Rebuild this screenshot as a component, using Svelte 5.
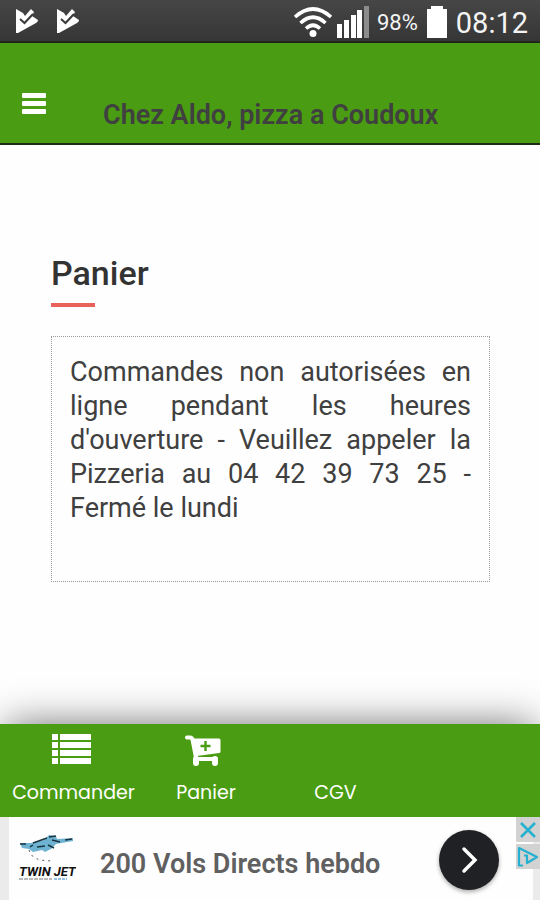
<script>
  const title = 'Chez Aldo, pizza a Coudoux';
  const notice =
    "Commandes non autorisées en ligne pendant les heures d'ouverture - Veuillez appeler la Pizzeria au 04 42 39 73 25 - Fermé le lundi";

  const tabs = [
    { label: 'Commander', icon: 'list' },
    { label: 'Panier', icon: 'cart' },
    { label: 'CGV', icon: null }
  ];

  let adVisible = $state(true);
</script>

<div class="app">
  <div class="status">
    <div class="status-left">
      {#each [0, 1] as i (i)}
        <svg width="24" height="26" viewBox="0 0 24 26">
          <path d="M2 1 L9 5 L11 8 L17 1 L20 4 L18 8 L24 12 Q24 14 22 15 L4 25 L2 25 Z" fill="#fff" />
          <path d="M6 11 L10.500 15 L19 6" fill="none" stroke="#3a3a3a" stroke-width="2" />
        </svg>
      {/each}
    </div>
    <div class="status-right">
      <svg width="40" height="32" viewBox="0 0 40 32">
        <g fill="none" stroke="#fff" stroke-width="3.600">
          <path d="M2 11 Q20 -5 38 11" />
          <path d="M7.500 17 Q20 5.500 32.500 17" />
          <path d="M13 22.500 Q20 16 27 22.500" />
        </g>
        <circle cx="20" cy="27.500" r="3.500" fill="#fff" />
      </svg>
      <svg width="34" height="34" viewBox="0 0 34 34">
        <path d="M1 19h5v14H1zM8 15h5v18H8zM15 10h5v23h-5zM21 5h5v28h-5z" fill="#fff" />
        <path d="M28 1h5v32h-5z" fill="#8c8c8c" />
      </svg>
      <span class="percent">98%</span>
      <svg class="battery" width="20" height="34" viewBox="0 0 20 34">
        <path d="M0 4h4V1h12v3h4v29H0z" fill="#fff" />
      </svg>
      <span class="clock">08:12</span>
    </div>
  </div>

  <header class="header">
    <button class="menu" aria-label="Menu">
      <svg width="24" height="21" viewBox="0 0 24 21">
        <g fill="#fff">
          <rect width="24" height="5" rx="1" />
          <rect y="8" width="24" height="5" rx="1" />
          <rect y="16" width="24" height="5" rx="1" />
        </g>
      </svg>
    </button>
    <h1>{title}</h1>
  </header>

  <main class="content">
    <h2>Panier</h2>
    <div class="notice">
      <p>{notice}</p>
    </div>
  </main>

  <nav class="tabs">
    {#each tabs as tab (tab.label)}
      <a class="tab" href="#{tab.label.toLowerCase()}">
        <span class="tab-icon">
          {#if tab.icon === 'list'}
            <svg width="44" height="32" viewBox="0 0 44 32">
              <path
                d="M0 0h6v6H0zM8 0h31v6H8zM0 8h6v6H0zM8 8h31v6H8zM0 16h6v6H0zM8 16h31v6H8zM0 24h6v6H0zM8 24h31v6H8z"
                fill="#fff"
              />
            </svg>
          {:else if tab.icon === 'cart'}
            <svg width="44" height="34" viewBox="0 0 44 34">
              <path d="M3 3.500h3q2 0 2.500 2L12.500 26" fill="none" stroke="#fff" stroke-width="4" stroke-linecap="round" stroke-linejoin="round" />
              <path d="M8.500 4.500H35q1.500 0 1.500 1.500V17.500q0 1.500-1.500 1.500L13 22z" fill="#fff" />
              <path d="M13 25h19" stroke="#fff" stroke-width="4" stroke-linecap="round" />
              <path d="M12 25v4M31 25v4" stroke="#fff" stroke-width="6" stroke-linecap="round" />
              <path d="M21.500 7v10M16.500 12h10" stroke="#4a9d12" stroke-width="2.400" />
            </svg>
          {/if}
        </span>
        <span>{tab.label}</span>
      </a>
    {/each}
  </nav>

  {#if adVisible}
    <aside class="ad">
      <svg class="ad-logo" width="58" height="50" viewBox="0 0 58 50">
        <path d="M2 9l11 0 13-3 5-5 7 1 1 3 16-1v3l-17 3-5 5-6 3-3-2-9 2-4-3-7-1z" fill="#6fb3d2" />
        <path d="M2 10h6M15 9l14-5M31 3l7-1M30 11l6 3M34 6l8 2M47 6l7-1M19 13l8-1M12 13l3-2" fill="none" stroke="#1b3440" stroke-width="1.500" />
        <path d="M11 16l2 5 8 5 12 1" fill="none" stroke="#555" stroke-dasharray="2 4" />
        <text x="1" y="42">TWIN JET</text>
        <path d="M1 45h33" stroke="#777" stroke-dasharray="4 1" />
        <path d="M36 45h13" stroke="#2c80c4" stroke-dasharray="3 1" />
      </svg>
      <a class="ad-text" href="#annonce">200 Vols Directs hebdo</a>
      <button class="ad-go" aria-label="Ouvrir l'annonce">
        <svg width="18" height="28" viewBox="0 0 18 28">
          <path d="M4 3l11 11L4 25" fill="none" stroke="#fff" stroke-width="3.500" stroke-linecap="round" />
        </svg>
      </button>
      <div class="ad-controls">
        <button aria-label="Fermer l'annonce" onclick={() => (adVisible = false)}>
          <svg width="18" height="18" viewBox="0 0 18 18">
            <path d="M2 2l14 14M16 2L2 16" stroke="#25b0cf" stroke-width="2.500" />
          </svg>
        </button>
        <button aria-label="À propos de cette annonce">
          <svg width="22" height="22" viewBox="0 0 22 22">
            <path d="M6 19.500H2V2L20 11L10 17V9.500H7M9 5v2" fill="none" stroke="#25b0cf" stroke-width="2.200" stroke-linejoin="round" />
          </svg>
        </button>
      </div>
    </aside>
  {/if}
</div>

<style>
  :global(body) {
    margin: 0;
    background: #fefefe;
    font-family: Roboto, 'Liberation Sans', sans-serif;
  }

  .app {
    display: flex;
    flex-direction: column;
    min-height: 100vh;
  }

  svg {
    display: block;
    flex: none;
  }

  h1,
  h2,
  p {
    margin: 0;
  }

  button {
    padding: 0;
    border: 0;
    background: none;
    cursor: pointer;
  }

  .status {
    display: flex;
    justify-content: space-between;
    align-items: center;
    height: 41px;
    padding: 0 12px 0 14px;
    border-bottom: 2px solid #1f241c;
    background: linear-gradient(#464646, #363636);
    color: #f4f4f4;
  }

  .status-left {
    display: flex;
    gap: 17px;
  }

  .status-right {
    display: flex;
    align-items: center;
    gap: 3px;
    padding-top: 2px;
  }

  .percent {
    padding: 2px 6px 0 4px;
    font-size: 22px;
  }

  .clock {
    padding: 2px 0 0 6px;
    font-size: 29px;
  }

  .header {
    display: flex;
    align-items: center;
    height: 80px;
    padding: 20px 22px 0;
    border-bottom: 2px solid #1d2b14;
    background: #4a9d12;
  }

  .menu {
    width: 24px;
  }

  h1 {
    padding: 24px 0 0 57px;
    color: #404040;
    font-size: 27px;
    font-weight: 600;
    line-height: 34px;
  }

  .content {
    flex: 1;
    padding: 108px 50px 0 51px;
    color: #404040;
  }

  h2 {
    color: #333;
    font-size: 34px;
    font-weight: 500;
    line-height: 40px;
  }

  h2::after {
    content: '';
    display: block;
    width: 44px;
    height: 4px;
    margin: 10px 0 29px;
    background: #e8625a;
  }

  .notice {
    padding: 18px 18px 56px;
    border: 1px dotted #999;
  }

  p {
    font-size: 27px;
    line-height: 34px;
    text-align: justify;
  }

  .tabs {
    display: flex;
    height: 93px;
    background: #4a9d12;
    box-shadow: 0 -4px 40px -6px #666;
  }

  .tab {
    display: flex;
    flex-direction: column;
    align-items: center;
    width: 141px;
    padding-top: 10px;
    color: #fff;
    font-family: Poppins, Inter, sans-serif;
    font-size: 19px;
    line-height: 28px;
    text-decoration: none;
  }

  .tab:first-child {
    width: 147px;
  }

  .tab:nth-child(2) {
    width: 118px;
  }

  .tab-icon {
    height: 45px;
  }

  .ad {
    display: flex;
    align-items: center;
    height: 83px;
    border-left: 9px solid #ebebeb;
    background: #fefefe;
  }

  .ad-logo {
    margin-left: 9px;
  }

  .ad-logo text {
    fill: #111;
    font-size: 13px;
    font-style: italic;
    font-weight: 700;
  }

  .ad-text {
    flex: 1;
    padding: 10px 0 0 24px;
    color: #606060;
    font-size: 27px;
    font-weight: 600;
    text-decoration: none;
  }

  .ad-go {
    display: grid;
    place-items: center;
    width: 60px;
    height: 60px;
    margin: 2px 17px 0 0;
    border-radius: 50%;
    background: #202124;
    box-shadow: 0 2px 4px #aaa;
  }

  .ad-controls {
    display: flex;
    flex-direction: column;
    align-self: stretch;
    gap: 2px;
    width: 24px;
    background: linear-gradient(90deg, #fefefe 17px, #ebebeb 17px);
  }

  .ad-controls button {
    display: grid;
    place-items: center;
    width: 24px;
    height: 25px;
    background: #d2d2d2;
  }
</style>
